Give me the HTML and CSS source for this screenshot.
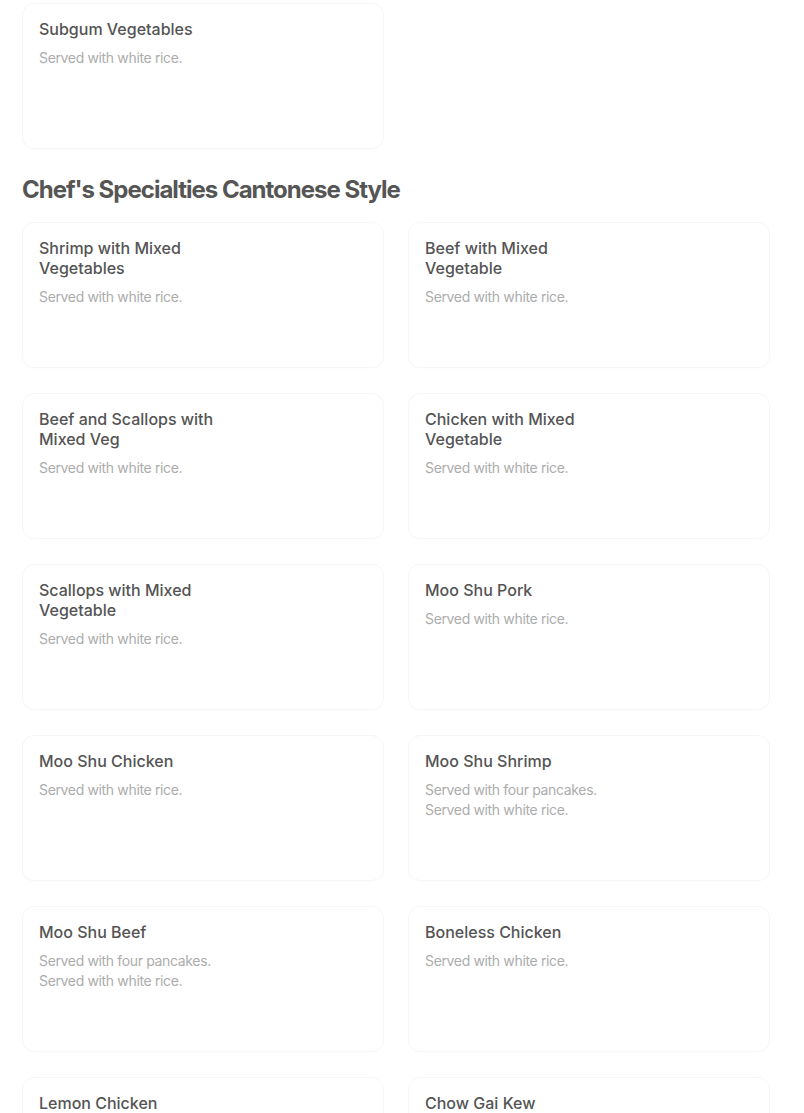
FILE: index.html
```html
<!DOCTYPE html>
<html lang="en">
<head>
<meta charset="utf-8">
<title>Menu</title>
<link rel="stylesheet" href="styles.css">
</head>
<body>
<main class="menu">
  <section class="section">
    <div class="grid">
      <article class="card"><div class="card-text"><h3 class="item-title">Subgum Vegetables</h3><p class="item-desc">Served with white rice.</p></div></article>
    </div>
  </section>
  <section class="section">
    <h2 class="section-title">Chef's Specialties Cantonese Style</h2>
    <div class="grid">
      <article class="card"><div class="card-text"><h3 class="item-title">Shrimp with Mixed Vegetables</h3><p class="item-desc">Served with white rice.</p></div></article>
      <article class="card"><div class="card-text"><h3 class="item-title">Beef with Mixed Vegetable</h3><p class="item-desc">Served with white rice.</p></div></article>
      <article class="card"><div class="card-text"><h3 class="item-title">Beef and Scallops with Mixed Veg</h3><p class="item-desc">Served with white rice.</p></div></article>
      <article class="card"><div class="card-text"><h3 class="item-title">Chicken with Mixed Vegetable</h3><p class="item-desc">Served with white rice.</p></div></article>
      <article class="card"><div class="card-text"><h3 class="item-title">Scallops with Mixed Vegetable</h3><p class="item-desc">Served with white rice.</p></div></article>
      <article class="card"><div class="card-text"><h3 class="item-title">Moo Shu Pork</h3><p class="item-desc">Served with white rice.</p></div></article>
      <article class="card"><div class="card-text"><h3 class="item-title">Moo Shu Chicken</h3><p class="item-desc">Served with white rice.</p></div></article>
      <article class="card"><div class="card-text"><h3 class="item-title">Moo Shu Shrimp</h3><p class="item-desc">Served with four pancakes.<br>Served with white rice.</p></div></article>
      <article class="card"><div class="card-text"><h3 class="item-title">Moo Shu Beef</h3><p class="item-desc">Served with four pancakes.<br>Served with white rice.</p></div></article>
      <article class="card"><div class="card-text"><h3 class="item-title">Boneless Chicken</h3><p class="item-desc">Served with white rice.</p></div></article>
      <article class="card"><div class="card-text"><h3 class="item-title">Lemon Chicken</h3><p class="item-desc">Served with white rice.</p></div></article>
      <article class="card"><div class="card-text"><h3 class="item-title">Chow Gai Kew</h3><p class="item-desc">Served with white rice.</p></div></article>
    </div>
  </section>
</main>
</body>
</html>
```

FILE: styles.css
```css
html, body {
  margin: 0;
  padding: 0;
  background: #ffffff;
}

body {
  font-family: Inter, "Noto Sans", "Liberation Sans", sans-serif;
  color: #545454;
  overflow: hidden;
}

.menu {
  padding: 3px 22px 0 22px;
}

.section-title {
  margin: 27px 0 18px 0;
  font-size: 24px;
  line-height: 28px;
  font-weight: 700;
  letter-spacing: -1px;
  color: #555555;
}

.grid {
  display: grid;
  grid-template-columns: 362px 362px;
  column-gap: 24px;
  row-gap: 25px;
}

.card {
  box-sizing: border-box;
  height: 146px;
  border: 1px solid #f6f6f6;
  border-radius: 12px;
  padding: 15px 16px;
  box-shadow: 0 1px 2px rgba(0, 0, 0, 0.01);
}

.card-text {
  max-width: 182px;
}

.item-title {
  margin: 0;
  font-size: 16px;
  line-height: 20px;
  font-weight: 500;
  color: #545454;
}

.item-desc {
  margin: 9px 0 0 0;
  font-size: 14px;
  line-height: 20px;
  font-weight: 400;
  letter-spacing: -0.35px;
  color: #acacac;
}
```
